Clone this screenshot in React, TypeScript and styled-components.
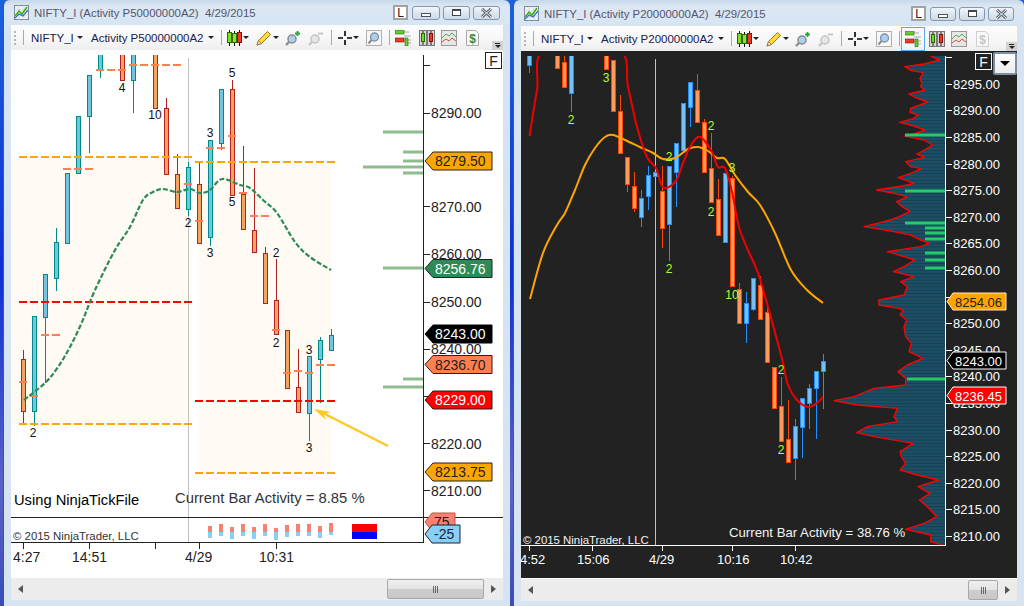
import React from "react";
import styled, { createGlobalStyle } from "styled-components";

const GlobalStyle = createGlobalStyle`
  html, body {
    margin: 0;
    padding: 0;
    width: 1024px;
    height: 606px;
    overflow: hidden;
    font-family: "Liberation Sans", Arial, sans-serif;
  }
`;

const Desktop = styled.div`
  display: flex;
  width: 1024px;
  height: 606px;
  padding-left: 3px;
  box-sizing: border-box;
  column-gap: 3px;
  background: linear-gradient(180deg, #1c62dc 0%, #0e2fd6 45%, #5a62c8 80%, #3a4cb8 100%);
`;

const ChartWindow = styled.section<{ $width: number; $side: number; $head: number }>`
  display: flex;
  flex-direction: column;
  box-sizing: border-box;
  width: ${({ $width }) => $width}px;
  height: 606px;
  padding: 0 ${({ $side }) => $side}px 6px;
  padding-top: ${({ $head }) => $head - 25}px;
  border-left: 1px solid #3c5a86;
  border-radius: 6px 6px 0 0;
  background: linear-gradient(180deg, #c6d8ea 0, #dbe7f3 6px, #d6e4f2 30px);
`;

const TitleBar = styled.header`
  display: flex;
  align-items: center;
  height: 25px;
  flex: none;
`;

const TitleIconSlot = styled.span`
  display: flex;
  margin-left: 3px;
`;

const TitleLabel = styled.span`
  margin-left: 5px;
  font-size: 11.4px;
  color: #55556e;
  white-space: pre;
`;

const LockButton = styled.div`
  display: flex;
  align-items: center;
  justify-content: center;
  box-sizing: border-box;
  width: 15px;
  height: 15px;
  margin-left: auto;
  border: 2px solid #a2a2a2;
  background: #fff;
  font-size: 12px;
  color: #222;
`;

const CaptionButton = styled.div<{ $width: number; $gap: number }>`
  display: flex;
  align-items: center;
  justify-content: center;
  box-sizing: border-box;
  width: ${({ $width }) => $width}px;
  height: 14px;
  margin-left: ${({ $gap }) => $gap}px;
  border: 1px solid #8497ad;
  border-radius: 3px;
  background: linear-gradient(180deg, #f2f6fa 0%, #dde6f0 50%, #cfdae6 100%);
`;

const CaptionEnd = styled.span`
  width: 3px;
`;

const Toolbar = styled.nav`
  display: flex;
  align-items: center;
  flex: none;
  height: 25px;
  background: linear-gradient(180deg, #fdfdfd 0%, #f6f6f6 60%, #eeeeee 100%);
`;

const Grip = styled.span`
  width: 2px;
  height: 14px;
  margin-left: 3px;
  background: repeating-linear-gradient(180deg, #b5b5b5 0 2px, transparent 2px 4px);
`;

const ToolSep = styled.span<{ $ml: number }>`
  width: 1px;
  height: 15px;
  margin-left: ${({ $ml }) => $ml}px;
  background: #a9a9a9;
`;

const ToolText = styled.span<{ $ml: number; $width: number }>`
  width: ${({ $width }) => $width}px;
  margin-left: ${({ $ml }) => $ml}px;
  font-size: 11.5px;
  color: #20204a;
  white-space: nowrap;
`;

const Caret = styled.span<{ $ml: number }>`
  width: 0;
  height: 0;
  margin-left: ${({ $ml }) => $ml}px;
  border-style: solid;
  border-width: 3px 3px 0;
  border-color: #222 transparent transparent;
`;

const ToolIcon = styled.span<{ $ml: number; $active?: boolean }>`
  display: flex;
  margin-left: ${({ $ml }) => $ml}px;
  ${({ $active }) =>
    $active ? "outline: 1px solid #5aa8ee; outline-offset: 3px; background: #f2f8fe;" : ""}
`;

const Overflow = styled.span`
  display: flex;
  flex-direction: column;
  align-items: center;
  justify-content: center;
  row-gap: 1px;
  align-self: flex-end;
  width: 11px;
  height: 9px;
  margin-left: auto;
  background: #d2d2d2;
  &::before {
    content: "";
    width: 5px;
    height: 1px;
    background: #222;
  }
  &::after {
    content: "";
    border-style: solid;
    border-width: 3px 3px 0;
    border-color: #222 transparent transparent;
  }
`;

const Pane = styled.div<{ $height: number; $dark?: boolean }>`
  position: relative;
  flex: none;
  height: ${({ $height }) => $height}px;
  background: ${({ $dark }) => ($dark ? "#222222" : "#ffffff")};
  ${({ $dark }) => ($dark ? "border-bottom: 1px solid #fff;" : "")}
  svg {
    display: block;
  }
`;

const FixedButton = styled.div<{ $dark?: boolean }>`
  position: absolute;
  top: 2px;
  right: ${({ $dark }) => ($dark ? 25 : 1)}px;
  display: flex;
  align-items: center;
  justify-content: center;
  box-sizing: border-box;
  width: 17px;
  height: 17px;
  border: 1px solid ${({ $dark }) => ($dark ? "#fff" : "#222")};
  background: ${({ $dark }) => ($dark ? "#222" : "#fff")};
  color: ${({ $dark }) => ($dark ? "#fff" : "#222")};
  font-size: 14px;
`;

const MenuButton = styled.div`
  position: absolute;
  top: 1px;
  right: 0;
  display: flex;
  align-items: center;
  justify-content: center;
  box-sizing: border-box;
  width: 24px;
  height: 23px;
  border: 2px solid #7d8ea0;
  border-radius: 2px;
  background: linear-gradient(180deg, #fff 0%, #ececec 100%);
  &::after {
    content: "";
    border-style: solid;
    border-width: 5px 5px 0;
    border-color: #000 transparent transparent;
  }
`;

const ScrollBar = styled.div`
  display: flex;
  align-items: center;
  flex: none;
  height: 22px;
  background: #ececec;
`;

const ScrollArrow = styled.span<{ $right?: boolean }>`
  display: flex;
  align-items: center;
  justify-content: center;
  flex: none;
  width: 19px;
  &::after {
    content: "";
    border-style: solid;
    border-width: 4px 0 4px 5px;
    border-color: transparent transparent transparent #555;
    ${({ $right }) => ($right ? "" : "transform: rotate(180deg);")}
  }
`;

const ScrollTrack = styled.div`
  display: flex;
  justify-content: flex-end;
  flex: 1;
`;

const ScrollThumb = styled.div<{ $width: number }>`
  display: flex;
  align-items: center;
  justify-content: center;
  column-gap: 1px;
  box-sizing: border-box;
  width: ${({ $width }) => $width}px;
  height: 20px;
  border: 1px solid #a8a8a8;
  border-radius: 2px;
  background: linear-gradient(180deg, #efefef 0%, #e4e4e4 48%, #cdcdcd 52%, #c8c8c8 100%);
`;

const ThumbGrip = styled.i`
  width: 1px;
  height: 7px;
  background: #666;
`;

const AxisText = styled.text<{ $size: number; $fill: string; $anchor?: string }>`
  font-size: ${({ $size }) => $size}px;
  fill: ${({ $fill }) => $fill};
  text-anchor: ${({ $anchor }) => $anchor || "start"};
`;

const CandleBody = styled.rect<{ $fill: string; $line: string }>`
  fill: ${({ $fill }) => $fill};
  stroke: ${({ $line }) => $line};
  stroke-width: 1;
  shape-rendering: crispEdges;
`;

const Rule = styled.line<{ $line: string; $weight?: number; $dash?: string }>`
  stroke: ${({ $line }) => $line};
  stroke-width: ${({ $weight }) => $weight || 1};
  ${({ $dash }) => ($dash ? `stroke-dasharray: ${$dash};` : "")}
  shape-rendering: crispEdges;
`;

const Curve = styled.path<{ $line: string; $weight: number; $dash?: string }>`
  fill: none;
  stroke: ${({ $line }) => $line};
  stroke-width: ${({ $weight }) => $weight};
  stroke-linejoin: round;
  ${({ $dash }) => ($dash ? `stroke-dasharray: ${$dash};` : "")}
`;

const ProfileEdge = styled.polyline`
  fill: none;
  stroke: #ff0000;
  stroke-width: 1.4;
  stroke-linejoin: round;
`;

const TagShape = styled.polygon<{ $fill: string; $line: string }>`
  fill: ${({ $fill }) => $fill};
  stroke: ${({ $line }) => $line};
  stroke-width: 1;
`;

const Band = styled.rect`
  fill: #fffaf4;
`;

const Block = styled.rect<{ $fill: string }>`
  fill: ${({ $fill }) => $fill};
`;

type Bar = [number, number, number, number | null, number | null, "u" | "d"];

type Skin = { up: [string, string]; down: [string, string] };

const lightSkin: Skin = { up: ["#72c5de", "#008b8b"], down: ["#f4a460", "#b22222"] };
const darkSkin: Skin = { up: ["#74c0f8", "#1e90ff"], down: ["#ff9a5c", "#ff4500"] };

const leftBars: Bar[] = [
  [23.5, 359, 411, 350, 423, "d"],
  [34.5, 316, 411, null, 426, "u"],
  [45.5, 274, 317, null, 383, "u"],
  [56.5, 242, 278, 228, 291, "u"],
  [67.5, 173, 243, null, null, "u"],
  [78.5, 116, 173, null, null, "u"],
  [89.5, 75, 116, null, 153, "u"],
  [100.5, 40, 70, null, 78, "u"],
  [122.5, 40, 80, null, null, "d"],
  [133.5, 40, 80, null, 113, "u"],
  [155.5, 40, 108, null, null, "d"],
  [166.5, 108, 174, 98, null, "d"],
  [177.5, 174, 208, 154, null, "d"],
  [188.5, 167, 209, 162, 216, "u"],
  [199.5, 184, 243, 163, null, "d"],
  [210.5, 140, 237, null, 246, "u"],
  [221.5, 89, 143, null, 150, "u"],
  [232.5, 89, 195, 80, null, "d"],
  [243.5, 194, 229, 146, null, "d"],
  [254.5, 230, 252, 168, null, "d"],
  [265.5, 253, 303, 247, null, "d"],
  [276.5, 300, 334, 259, null, "d"],
  [287.5, 330, 388, null, null, "d"],
  [298.5, 387, 412, 349, null, "d"],
  [309.5, 356, 413, null, 441, "u"],
  [320.5, 340, 359, 337, 403, "u"],
  [331.5, 335, 350, 329, null, "u"],
];

const rightBars: Bar[] = [
  [529.5, 40, 65, null, 73, "u"],
  [557.5, 40, 68, null, null, "d"],
  [564.5, 62, 87, 40, null, "d"],
  [571.5, 40, 93, null, 112, "u"],
  [606.5, 40, 69, null, null, "d"],
  [613.5, 60, 111, null, null, "d"],
  [620.5, 111, 153, 95, null, "d"],
  [627.5, 157, 184, null, 192, "d"],
  [634.5, 186, 208, 172, 212, "d"],
  [641.5, 198, 217, 190, 227, "u"],
  [648.5, 175, 196, 166, 210, "u"],
  [655.5, 172, 176, null, null, "u"],
  [662.5, 191, 228, 166, 248, "d"],
  [669.5, 166, 224, null, 261, "u"],
  [676.5, 143, 172, null, 207, "u"],
  [683.5, 103, 150, null, null, "u"],
  [690.5, 82, 107, null, 127, "u"],
  [697.5, 90, 122, 74, null, "d"],
  [704.5, 122, 172, 119, null, "d"],
  [711.5, 168, 202, 133, 203, "d"],
  [718.5, 199, 235, 179, null, "d"],
  [725.5, 173, 242, null, 243, "u"],
  [732.5, 178, 286, 176, null, "d"],
  [739.5, 289, 323, 283, null, "d"],
  [746.5, 303, 323, 292, 343, "u"],
  [753.5, 278, 309, null, 311, "u"],
  [760.5, 285, 319, 276, null, "d"],
  [767.5, 312, 362, 306, null, "d"],
  [774.5, 367, 408, null, null, "d"],
  [781.5, 406, 441, 377, null, "d"],
  [788.5, 439, 462, 400, null, "d"],
  [795.5, 426, 458, 419, 480, "u"],
  [802.5, 398, 427, null, 458, "u"],
  [809.5, 388, 403, 384, 429, "u"],
  [816.5, 371, 388, null, 439, "u"],
  [823.5, 361, 371, 354, 409, "u"],
];

const coralDashes = [
  [96, 126, 70], [129, 182, 65], [63, 94, 169], [41, 61, 335], [19, 28, 382], [30, 39, 396],
  [206, 226, 148], [228, 237, 136], [239, 248, 193], [250, 270, 216], [184, 193, 184],
  [195, 204, 221], [272, 281, 330], [283, 292, 373], [294, 303, 371], [305, 314, 373], [316, 336, 365],
];

const levels = [
  [19, 193, 157, "#ffa500"], [195, 336, 162, "#ffa500"], [19, 193, 424, "#ffa500"],
  [195, 336, 473, "#ffa500"], [19, 193, 302, "#ff0000"], [195, 336, 401, "#ff0000"],
] as const;

const leftMarks: [number, number, string][] = [
  [232, 73, "5"], [122, 88, "4"], [155, 115, "10"], [188, 223, "2"], [210, 133, "3"], [210, 253, "3"],
  [232, 202, "5"], [276, 253, "2"], [276, 343, "2"], [309, 350, "3"], [309, 448, "3"], [33, 433, "2"],
];

const rightMarks: [number, number, string][] = [
  [606, 78, "3"], [571, 120, "2"], [669, 157, "2"], [669, 269, "2"], [711, 126, "2"], [711, 212, "2"],
  [732, 168, "3"], [732, 295, "10"], [781, 370, "2"], [781, 450, "2"],
];

type Pt = [number, number];

const smaLine: Pt[] = [
  [24, 400], [45, 383], [58, 367], [70, 347], [82, 322], [95, 290], [115, 250], [130, 227], [143, 200],
  [153, 192], [163, 189], [177, 192], [190, 189], [200, 193], [210, 190], [222, 179], [240, 185],
  [250, 188], [263, 200], [277, 213], [295, 242], [310, 257], [331, 270],
];

const fastLine: Pt[] = [
  [529.5, 136], [537, 90], [545, 50], [618, 50], [628, 87], [637, 127], [647, 157], [656, 168], [662, 186],
  [669, 187], [677, 179], [683, 163], [690, 147], [698, 137], [704, 140], [712, 152], [718, 167], [725, 168],
  [732, 192], [739, 227], [747, 248], [758, 273], [768, 307], [777, 340], [783, 363], [788, 385], [797, 400],
  [808, 407], [817, 403], [823, 397],
];

const slowLine: Pt[] = [
  [530, 299], [543, 253], [557, 225], [565, 213], [575, 190], [585, 165], [595, 148], [605, 137], [613, 135],
  [625, 140], [642, 148], [653, 153], [663, 159], [675, 158], [688, 149], [698, 147], [708, 151], [717, 158],
  [725, 159], [735, 175], [748, 192], [760, 205], [775, 233], [791, 270], [807, 290], [823, 303],
];

// catmull-rom through the traced points, the chart lines are smoothed in the original
const smooth = (pts: Pt[]): string => {
  let d = `M${pts[0][0]} ${pts[0][1]}`;
  for (let i = 0; i < pts.length - 1; i++) {
    const p0 = pts[i - 1] || pts[i];
    const p1 = pts[i];
    const p2 = pts[i + 1];
    const p3 = pts[i + 2] || p2;
    const c1x = p1[0] + (p2[0] - p0[0]) / 6;
    const c1y = p1[1] + (p2[1] - p0[1]) / 6;
    const c2x = p2[0] - (p3[0] - p1[0]) / 6;
    const c2y = p2[1] - (p3[1] - p1[1]) / 6;
    d += ` C${c1x} ${c1y} ${c2x} ${c2y} ${p2[0]} ${p2[1]}`;
  }
  return d;
};

// left edge of the volume profile, traced off the 3x crops: [zoom y, zoom x]
const profileTop = [
  [18, 320], [30, 347], [42, 300], [50, 242], [62, 262], [68, 298], [85, 288], [100, 293], [110, 290],
  [120, 303], [132, 255], [145, 280], [156, 311], [175, 260], [187, 258], [195, 282], [205, 270],
  [217, 227], [228, 270], [240, 303], [252, 270], [258, 243], [270, 300], [285, 326], [295, 310],
  [312, 279], [322, 302], [335, 245], [350, 260], [356, 292], [370, 260], [383, 223], [400, 270],
  [408, 235], [420, 158], [430, 210], [440, 250], [455, 218], [470, 235], [485, 258], [500, 225],
  [510, 200], [530, 120], [545, 210], [555, 260], [570, 290], [580, 316], [590, 290], [605, 190],
  [620, 240], [630, 272], [650, 240], [665, 208], [680, 270], [695, 230], [710, 250], [735, 240],
  [750, 165], [765, 165], [775, 225],
];
const profileBottom = [
  [0, 238], [15, 228], [30, 248], [50, 240], [80, 245], [100, 262], [125, 255], [145, 297], [165, 250],
  [185, 222], [205, 245], [225, 245], [235, 150], [260, 90], [272, 30], [285, 100], [295, 220], [320, 210],
  [335, 220], [350, 130], [368, 98], [380, 150], [400, 268], [425, 228], [440, 232], [460, 245], [480, 228],
  [495, 280], [510, 344], [530, 282], [550, 318], [570, 286], [590, 310], [620, 338], [640, 300], [658, 245],
  [675, 320], [695, 320], [705, 355],
];
const profilePoints = [
  ...profileTop.map(([y, x]) => `${824 + x / 3},${50 + y / 3}`),
  ...profileBottom.map(([y, x]) => `${824 + x / 3},${310 + y / 3}`),
].join(" ");

const Candles: React.FC<{ bars: Bar[]; skin: Skin }> = ({ bars, skin }) => (
  <>
    {bars.map(([x, top, bottom, wickTop, wickBottom, kind]) => {
      const [fill, line] = kind === "u" ? skin.up : skin.down;
      return (
        <g key={x}>
          {wickTop !== null && <Rule x1={x} x2={x} y1={wickTop} y2={top} $line={line} />}
          {wickBottom !== null && <Rule x1={x} x2={x} y1={bottom} y2={wickBottom} $line={line} />}
          <CandleBody x={x - 2} y={top + 0.5} width={4} height={bottom - top} $fill={fill} $line={line} />
        </g>
      );
    })}
  </>
);

type TagProps = {
  y: number;
  left: number;
  tip: number;
  right: number;
  label: string;
  fill: string;
  line: string;
  text: string;
  size: number;
  half?: number;
};

const PriceTag: React.FC<TagProps> = ({ y, left, tip, right, label, fill, line, text, size, half = 9 }) => (
  <g>
    <TagShape
      points={`${tip},${y} ${left},${y - half} ${right},${y - half} ${right},${y + half} ${left},${y + half}`}
      $fill={fill}
      $line={line}
    />
    <AxisText x={left + 2} y={y + 5} $size={size} $fill={text}>
      {label}
    </AxisText>
  </g>
);

const LeftChart: React.FC = () => (
  <svg width={492} height={528} viewBox="11 50 492 528">
    <defs>
      <clipPath id="leftPlot">
        <rect x={11} y={55} width={412} height={487} />
      </clipPath>
    </defs>
    <Band x={12} y={158} width={180} height={266} />
    <Band x={199} y={162} width={132} height={311} />
    <Rule x1={188.5} x2={188.5} y1={58} y2={542} $line="#c0c0c0" />
    <g clipPath="url(#leftPlot)">
      <Candles bars={leftBars} skin={lightSkin} />
    </g>
    {levels.map(([x1, x2, y, c]) => (
      <Rule key={`${x1}-${y}`} x1={x1} x2={x2} y1={y} y2={y} $line={c} $weight={2} $dash="8 3" />
    ))}
    {coralDashes.map(([x1, x2, y]) => (
      <Rule key={`${x1}-${y}`} x1={x1} x2={x2} y1={y} y2={y} $line="#ff7f50" $weight={2} $dash="8 3" />
    ))}
    <Curve d={smooth(smaLine)} $line="#2e8b57" $weight={2.2} $dash="5 2" />
    {leftMarks.map(([x, y, t]) => (
      <AxisText key={`${x}-${y}`} x={x} y={y + 4} $size={12} $fill="#111" $anchor="middle">
        {t}
      </AxisText>
    ))}
    {[
      [132, 383], [152, 403], [161, 403], [167, 363], [173, 403], [268, 383], [379, 403], [387, 383],
    ].map(([y, x]) => (
      <Block key={y} x={x} y={y - 1.5} width={423 - x} height={3} $fill="#8fbc8f" />
    ))}
    <path d="M388 446 L319 411" fill="none" stroke="#ffc61e" strokeWidth={2} />
    <polygon points="314,409 330,412 324,415 326,420" fill="#ffc61e" />
    <Rule x1={423.5} x2={423.5} y1={55} y2={542} $line="#222" />
    <Rule x1={11} x2={503} y1={517.5} y2={517.5} $line="#222" />
    <Rule x1={11} x2={424} y1={542.5} y2={542.5} $line="#222" />
    {[65, 113, 206.5, 254, 302, 349, 396, 443.5, 490.5].map((y) => (
      <Rule key={y} x1={424} x2={430} y1={Math.floor(y) + 0.5} y2={Math.floor(y) + 0.5} $line="#222" />
    ))}
    {[
      ["8290.00", 113], ["8270.00", 206.5], ["8260.00", 254], ["8250.00", 302], ["8240.00", 349],
      ["8230.00", 396], ["8220.00", 443.5], ["8210.00", 490.5],
    ].map(([t, y]) => (
      <AxisText key={t} x={431} y={(y as number) + 5} $size={14} $fill="#222">
        {t}
      </AxisText>
    ))}
    <PriceTag y={161} tip={425} left={433} right={492} label="8279.50" fill="#ffa500" line="#222" text="#222" size={14} />
    <PriceTag y={268.5} tip={425} left={433} right={492} label="8256.76" fill="#2e8b57" line="#222" text="#fff" size={14} />
    <PriceTag y={334} tip={425} left={433} right={492} label="8243.00" fill="#000" line="#000" text="#fff" size={14} />
    <PriceTag y={364.5} tip={425} left={433} right={492} label="8236.70" fill="#ff7f50" line="#222" text="#222" size={14} />
    <PriceTag y={400} tip={425} left={433} right={492} label="8229.00" fill="#ff0000" line="#222" text="#fff" size={14} />
    <PriceTag y={472} tip={425} left={433} right={492} label="8213.75" fill="#ffa500" line="#222" text="#222" size={14} />
    <PriceTag y={522} tip={425} left={432} right={455} label="75" fill="#fa8072" line="#c05040" text="#222" size={14} />
    <PriceTag y={534} tip={425} left={432} right={460} label="-25" fill="#87cefa" line="#222" text="#222" size={14} />
    {[
      [210, 526, 538], [221, 524, 536], [232, 527, 539], [243, 524, 536], [254, 527, 539], [265, 524, 536],
      [276, 528, 540], [287, 525, 537], [298, 524, 536], [309, 524, 536], [320, 526, 538], [331, 523, 535],
    ].map(([x, top, bottom]) => (
      <g key={x}>
        <Block x={x - 2} y={top} width={4} height={532 - top} $fill="#fa8072" />
        <Block x={x - 2} y={532} width={4} height={bottom - 532} $fill="#87cefa" />
      </g>
    ))}
    <Block x={352} y={524} width={25} height={8} $fill="#ff0000" />
    <Block x={352} y={532} width={25} height={7} $fill="#0000ff" />
    <AxisText x={14} y={505} $size={14.7} $fill="#000">Using NinjaTickFile</AxisText>
    <AxisText x={175} y={503} $size={14.8} $fill="#333">Current Bar Activity = 8.85 %</AxisText>
    <AxisText x={13} y={540} $size={11.4} $fill="#333">© 2015 NinjaTrader, LLC</AxisText>
    {[23, 89, 155, 199, 276].map((x) => (
      <Rule key={x} x1={x + 0.5} x2={x + 0.5} y1={543} y2={549} $line="#222" />
    ))}
    {[
      ["4:27", 13], ["14:51", 72], ["4/29", 185], ["10:31", 259],
    ].map(([t, x]) => (
      <AxisText key={t} x={x as number} y={562} $size={14} $fill="#222">
        {t}
      </AxisText>
    ))}
  </svg>
);

const RightChart: React.FC = () => (
  <svg width={495} height={526} viewBox="521 51 495 526">
    <defs>
      <clipPath id="rightPlot">
        <rect x={521} y={56} width={424} height={489} />
      </clipPath>
      <pattern id="profileStripes" width={4} height={3.33} patternUnits="userSpaceOnUse">
        <rect width={4} height={3.33} fill="#1c4f66" />
        <rect width={4} height={1} fill="#173f52" />
      </pattern>
    </defs>
    <Rule x1={655.5} x2={655.5} y1={59} y2={545} $line="#c0c0c0" />
    <g clipPath="url(#rightPlot)">
      <Candles bars={rightBars} skin={darkSkin} />
      <Curve d={smooth(slowLine)} $line="#ffa500" $weight={2} />
      <Curve d={smooth(fastLine)} $line="#ee0000" $weight={2} />
      <polygon points={`945,56 ${profilePoints} 945,545`} fill="url(#profileStripes)" />
      <ProfileEdge points={profilePoints} />
      {[
        [135, 905], [191, 905], [223, 905], [228, 925], [233, 925], [239, 925], [253, 925], [260, 925],
        [268, 925], [379, 907],
      ].map(([y, x]) => (
        <Block key={y} x={x} y={y - 1.5} width={945 - x} height={3} $fill="#22cc66" />
      ))}
    </g>
    {rightMarks.map(([x, y, t]) => (
      <AxisText key={`${x}-${y}`} x={x} y={y + 4} $size={12} $fill="#adff2f" $anchor="middle">
        {t}
      </AxisText>
    ))}
    <Rule x1={945.5} x2={945.5} y1={56} y2={545} $line="#fff" />
    <Rule x1={521} x2={946} y1={545.5} y2={545.5} $line="#fff" />
    {[8300, 8295, 8290, 8285, 8280, 8275, 8270, 8265, 8260, 8255, 8250, 8245, 8240, 8235, 8230, 8225, 8220, 8215, 8210].map(
      (p) => {
        const y = 536 + ((8210 - p) / 5) * 26.6;
        const row = Math.round(y) + 0.5;
        return (
          <g key={p}>
            <Rule x1={946} x2={952} y1={row} y2={row} $line="#fff" />
            {p !== 8300 && (
              <AxisText x={953} y={y + 5} $size={13} $fill="#fff">
                {p}.00
              </AxisText>
            )}
          </g>
        );
      },
    )}
    <PriceTag y={301.5} tip={947} left={953} right={1006} label="8254.06" fill="#ffa500" line="#ffe9b8" text="#222" size={13} half={8.5} />
    <PriceTag y={360.5} tip={947} left={953} right={1006} label="8243.00" fill="#000" line="#fff" text="#fff" size={13} half={8.5} />
    <PriceTag y={395.5} tip={947} left={953} right={1006} label="8236.45" fill="#ff0000" line="#fff" text="#fff" size={13} half={8.5} />
    <AxisText x={729} y={537} $size={13.2} $fill="#f4f4f4">Current Bar Activity = 38.76 %</AxisText>
    <AxisText x={523} y={544} $size={11.4} $fill="#f4f4f4">© 2015 NinjaTrader, LLC</AxisText>
    {[529, 592, 662, 732, 795].map((x) => (
      <Rule key={x} x1={x + 0.5} x2={x + 0.5} y1={546} y2={551} $line="#fff" />
    ))}
    {[
      ["4:52", 520], ["15:06", 577], ["4/29", 649], ["10:16", 717], ["10:42", 780],
    ].map(([t, x]) => (
      <AxisText key={t} x={x as number} y={564} $size={13} $fill="#fff">
        {t}
      </AxisText>
    ))}
  </svg>
);

const AppIcon: React.FC = () => (
  <svg width={15} height={15} viewBox="0 0 15 15">
    <rect x={0.5} y={0.5} width={14} height={14} fill="#eef2f6" stroke="#7a8796" />
    <path d="M0 5h15M0 10h15M5 0v15M10 0v15" stroke="#c3ccd6" strokeWidth={0.6} />
    <polyline points="1,11 5,6 8,9 13,2" fill="none" stroke="#38b000" strokeWidth={1.5} />
    <polyline points="1,13 5,9 9,11 14,5" fill="none" stroke="#2f6fd0" strokeWidth={1.2} />
  </svg>
);

const CandlesIcon: React.FC = () => (
  <svg width={15} height={16} viewBox="0 0 15 16">
    <path d="M2.5 0v16M7.5 1v15M12.5 0v16" stroke="#111" />
    <rect x={0.5} y={2.5} width={4} height={10} fill="#7fdc1e" stroke="#2c6a00" />
    <rect x={5.5} y={3.5} width={4} height={9} fill="#8fe030" stroke="#2c6a00" />
    <rect x={10.5} y={2.5} width={4} height={10} fill="#ee3a2a" stroke="#8a1208" />
  </svg>
);

const PencilIcon: React.FC = () => (
  <svg width={16} height={16} viewBox="0 0 16 16">
    <polygon points="1,15 2.5,10.5 11.5,1.5 14.5,4.5 5.5,13.5" fill="#ffd83a" stroke="#b07a10" />
    <polygon points="1,15 2.5,10.5 5.5,13.5" fill="#f5deb0" stroke="#7a5a20" strokeWidth={0.6} />
  </svg>
);

const LensIcon: React.FC<{ tint: string; rim: string; sign: string; plus?: boolean }> = ({ tint, rim, sign, plus }) => (
  <svg width={16} height={16} viewBox="0 0 16 16">
    <circle cx={7} cy={9} r={4} fill={tint} stroke={rim} strokeWidth={1.5} />
    <path d="M4 12 L1 15" stroke={rim} strokeWidth={2.4} />
    <path d={plus ? "M10 3.5h5M12.5 1v5" : "M10 3.5h5"} stroke={sign} strokeWidth={1.8} />
  </svg>
);

const CrossIcon: React.FC = () => (
  <svg width={16} height={16} viewBox="0 0 16 16">
    <path d="M8 1v5M8 10v5M1 8h5M10 8h5" stroke="#000" strokeWidth={1.6} />
  </svg>
);

const FindIcon: React.FC = () => (
  <svg width={16} height={16} viewBox="0 0 16 16">
    <rect x={0.5} y={0.5} width={15} height={15} fill="#f7f7f7" stroke="#b0b0b0" />
    <circle cx={8.5} cy={7} r={4} fill="#a9d0f2" stroke="#8090a0" strokeWidth={1.3} />
    <path d="M5.5 10 L2.5 13.5" stroke="#8a8a8a" strokeWidth={2} />
  </svg>
);

const BarsIcon: React.FC = () => (
  <svg width={16} height={16} viewBox="0 0 16 16">
    <path d="M0 2h14M9 6h7M9 10h7M11 13h5" stroke="#a8a8a8" />
    <rect x={0} y={0} width={9} height={4} fill="#5fce2a" stroke="#2c6a00" strokeWidth={0.6} />
    <rect x={0} y={8} width={9} height={4} fill="#ee3a2a" stroke="#8a1208" strokeWidth={0.6} />
    <rect x={10} y={8} width={3} height={8} fill="#5fce2a" stroke="#2c6a00" strokeWidth={0.6} />
  </svg>
);

const BoxedCandlesIcon: React.FC = () => (
  <svg width={16} height={16} viewBox="0 0 16 16">
    <rect x={0.5} y={0.5} width={15} height={15} fill="#d5d5d5" stroke="#777" />
    <path d="M4 1v14M8 1v14M12 1v14" stroke="#222" />
    <rect x={2.5} y={3.5} width={3} height={8} fill="#6fd820" stroke="#2c6a00" />
    <rect x={10.5} y={3.5} width={3} height={8} fill="#ee3a2a" stroke="#8a1208" />
  </svg>
);

const LinesIcon: React.FC = () => (
  <svg width={16} height={16} viewBox="0 0 16 16">
    <rect x={0.5} y={0.5} width={15} height={15} fill="#e6e6e6" stroke="#999" />
    <polyline points="1,8 5,4 8,6 11,3 15,7" fill="none" stroke="#49b04a" />
    <polyline points="1,12 5,9 8,11 11,8 15,11" fill="none" stroke="#d8504a" />
  </svg>
);

const DollarIcon: React.FC<{ muted?: boolean }> = ({ muted }) => (
  <svg width={15} height={16} viewBox="0 0 15 16">
    <polygon points="1.5,0.5 10.5,0.5 13.5,3.5 13.5,15.5 1.5,15.5" fill="#f8f8f8" stroke={muted ? "#cfcfcf" : "#a8a8a8"} />
    <text x={7.5} y={13} textAnchor="middle" fontSize={12} fontWeight="bold" fill={muted ? "#c4c4c4" : "#2e8b3a"}>
      $
    </text>
  </svg>
);

const MinimizeGlyph = styled.i`
  box-sizing: border-box;
  width: 10px;
  height: 4px;
  margin-top: 4px;
  border: 1px solid #4a525c;
  background: #fff;
`;

const MaximizeGlyph = styled.i`
  box-sizing: border-box;
  width: 9px;
  height: 7px;
  border: 1px solid #3f4650;
  border-top-width: 2px;
  background: #fff;
`;

const CloseGlyph: React.FC = () => (
  <svg width={13} height={10} viewBox="0 0 13 10">
    <path d="M2 1 L11 9M11 1 L2 9" stroke="#5a6470" strokeWidth={3} />
    <path d="M2 1 L11 9M11 1 L2 9" stroke="#eef2f6" strokeWidth={1} />
  </svg>
);

type FrameProps = {
  activity: string;
  width: number;
  side: number;
  head: number;
  captions: [number, number, number];
  active?: boolean;
  children: React.ReactNode;
};

const Frame: React.FC<FrameProps> = ({ activity, width, side, head, captions, active, children }) => (
  <ChartWindow $width={width} $side={side} $head={head}>
    <TitleBar>
      <TitleIconSlot>
        <AppIcon />
      </TitleIconSlot>
      <TitleLabel>{`NIFTY_I (${activity})  4/29/2015`}</TitleLabel>
      <LockButton>L</LockButton>
      <CaptionButton $width={captions[0]} $gap={4}>
        <MinimizeGlyph />
      </CaptionButton>
      <CaptionButton $width={captions[1]} $gap={3}>
        <MaximizeGlyph />
      </CaptionButton>
      <CaptionButton $width={captions[2]} $gap={3}>
        <CloseGlyph />
      </CaptionButton>
      <CaptionEnd />
    </TitleBar>
    <Toolbar>
      <Grip />
      <ToolSep $ml={7} />
      <ToolText $ml={7} $width={44}>NIFTY_I</ToolText>
      <Caret $ml={2} />
      <ToolText $ml={8} $width={117}>{activity}</ToolText>
      <Caret $ml={0} />
      <ToolSep $ml={7} />
      <ToolIcon $ml={5}><CandlesIcon /></ToolIcon>
      <Caret $ml={1} />
      <ToolIcon $ml={7}><PencilIcon /></ToolIcon>
      <Caret $ml={1} />
      <ToolIcon $ml={6}><LensIcon tint="#a9d0f2" rim="#8a8a8a" sign="#22a83a" plus /></ToolIcon>
      <ToolIcon $ml={7}><LensIcon tint="#e6e6e6" rim="#c4c4c4" sign="#c4c4c4" /></ToolIcon>
      <ToolSep $ml={7} />
      <ToolIcon $ml={5}><CrossIcon /></ToolIcon>
      <Caret $ml={0} />
      <ToolIcon $ml={7}><FindIcon /></ToolIcon>
      <ToolSep $ml={7} />
      <ToolIcon $ml={5} $active={active}><BarsIcon /></ToolIcon>
      <ToolIcon $ml={8}><BoxedCandlesIcon /></ToolIcon>
      <ToolIcon $ml={6}><LinesIcon /></ToolIcon>
      <ToolIcon $ml={8}><DollarIcon muted={active} /></ToolIcon>
      <Overflow />
    </Toolbar>
    {children}
  </ChartWindow>
);

const ScrollRow: React.FC<{ thumb: number }> = ({ thumb }) => (
  <ScrollBar>
    <ScrollArrow />
    <ScrollTrack>
      <ScrollThumb $width={thumb}>
        <ThumbGrip />
        <ThumbGrip />
        <ThumbGrip />
      </ScrollThumb>
    </ScrollTrack>
    <ScrollArrow $right />
  </ScrollBar>
);

const App: React.FC = () => (
  <>
    <GlobalStyle />
    <Desktop>
      <Frame activity="Activity P50000000A2" width={507} side={7} head={25} captions={[28, 27, 27]}>
        <Pane $height={528}>
          <LeftChart />
          <FixedButton>F</FixedButton>
        </Pane>
        <ScrollRow thumb={97} />
      </Frame>
      <Frame activity="Activity P20000000A2" width={511} side={7} head={26} captions={[26, 26, 26]} active>
        <Pane $height={527} $dark>
          <RightChart />
          <FixedButton $dark>F</FixedButton>
          <MenuButton />
        </Pane>
        <ScrollRow thumb={30} />
      </Frame>
    </Desktop>
  </>
);

export default App;
